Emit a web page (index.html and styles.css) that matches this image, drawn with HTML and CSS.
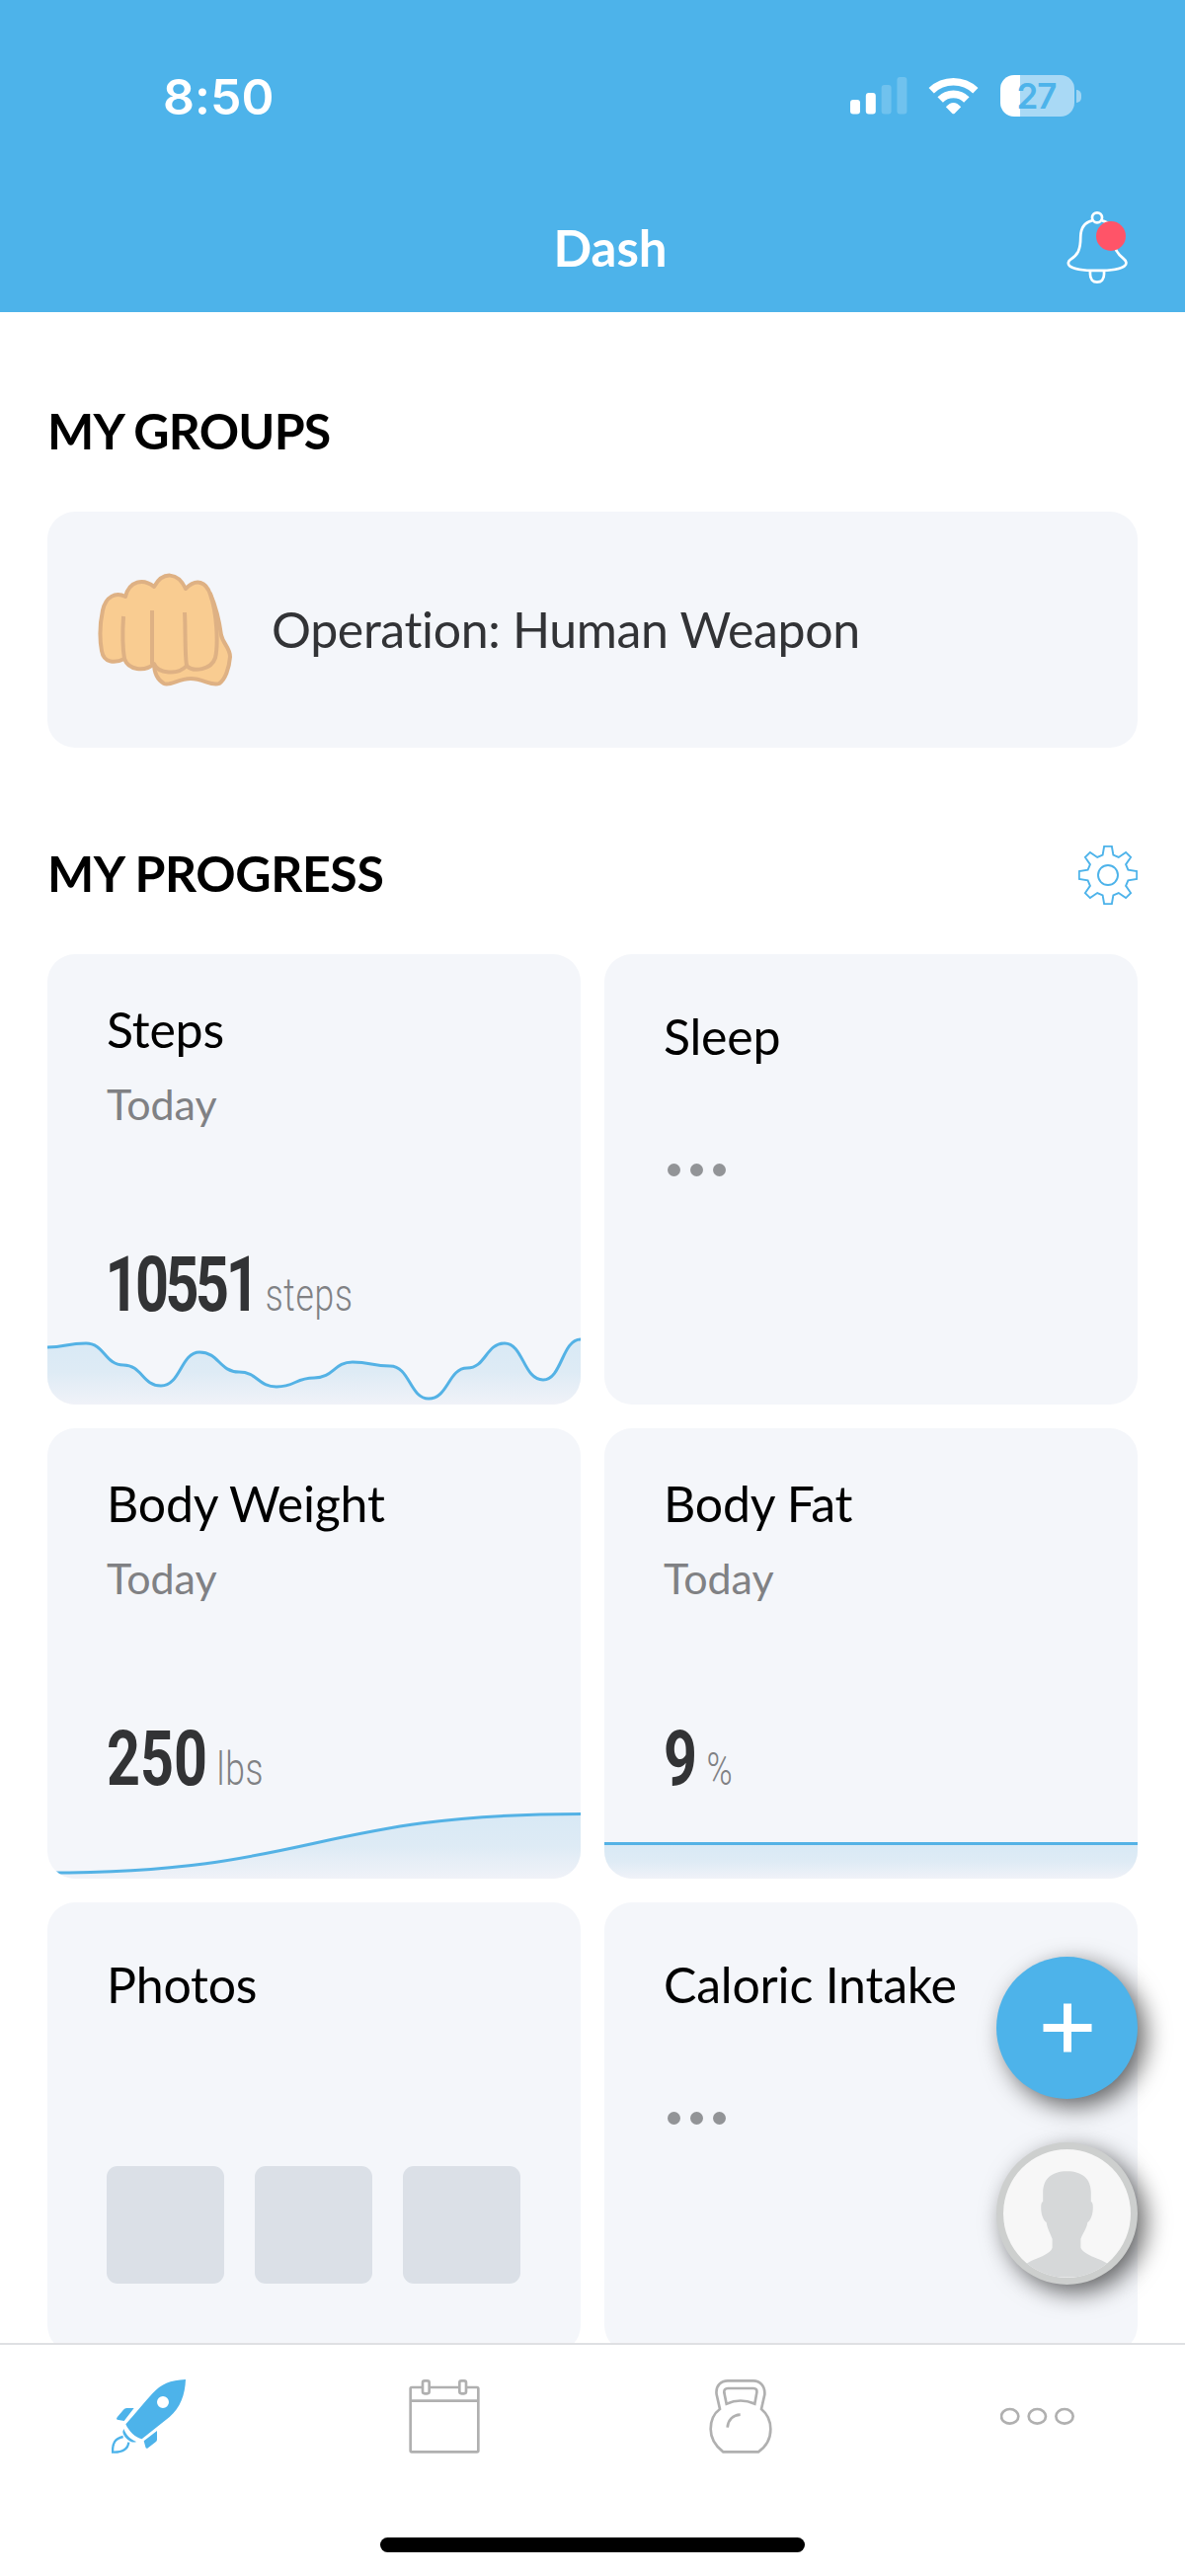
FILE: index.html
```html
<!DOCTYPE html>
<html lang="en">
<head>
    <meta charset="UTF-8">
    <meta name="viewport" content="width=device-width, initial-scale=1.0">
    <title>Dash</title>
    <link rel="stylesheet" href="styles.css">
</head>
<body>
    <header class="header">
        <div class="status-bar">
            <span class="time">8:50</span>
            <div class="status-icons">
                <svg class="signal" viewBox="0 0 58 38">
                    <rect x="0" y="23" width="10" height="14.5" rx="3"/>
                    <rect x="15.8" y="16" width="10" height="21.5" rx="3"/>
                    <rect class="dim" x="31.6" y="8" width="10" height="29.5" rx="3"/>
                    <rect class="dim" x="47.4" y="0" width="10" height="37.5" rx="3"/>
                </svg>
                <svg class="wifi" viewBox="361 84 152 114">
                    <path class="band" d="M370 125A97 97 0 0 1 504 125M397 153A56 56 0 0 1 477 153"/>
                    <path d="M414 175Q437 149 460 175L441 194Q437 198 433 194Z"/>
                </svg>
                <div class="battery"><span>27</span></div>
                <div class="battery-cap"></div>
            </div>
        </div>
        <div class="nav-bar">
            <h1>Dash</h1>
            <div class="bell">
                <svg viewBox="780 493 184 218">
                    <circle cx="872" cy="512" r="15"/>
                    <path d="M857 521C832 527 822 545 822 571C822 610 813 625 792 638C784 643 783 652 788 657C800 668 835 672 872 672C910 672 944 668 956 657C962 651 961 643 952 636C934 622 922 606 922 571C922 545 912 527 887 521"/>
                    <path d="M851 673V683C851 698 859 707 872 707C885 707 893 698 893 683V673"/>
                </svg>
                <span class="badge"></span>
            </div>
        </div>
    </header>

    <main class="content">
        <h2>MY GROUPS</h2>
        <div class="group-card">
            <svg class="fist" viewBox="69 199 137 116">
                <path class="skin" d="M183 220C188 232 192 247 194 262C196 271 203 275 203 284C202 296 198 307 192 311C184 314 176 306 163 306C151 306 142 314 136 311C129 307 126 300 126 290Z"/>
                <path class="skin" d="M97 223C87 218 77 223 74 237C71 251 71 267 73 278C75 290 86 291 96 286C100 297 116 300 126 291C130 301 150 303 159 293C166 300 184 297 188 285C191 272 190 240 183 221C179 208 169 204 158 215C150 198 135 197 126 213C115 204 101 207 97 223Z"/>
                <path class="crease" d="M95 243C94 258 94 274 96 286M124 237V291M157 239C158 258 157 280 159 293"/>
            </svg>
            <span>Operation: Human Weapon</span>
        </div>

        <div class="section-title">
            <h2>MY PROGRESS</h2>
            <svg class="gear" viewBox="-78 -78 156 156">
                <circle r="26"/>
                <path d="M-10-76H10L14-53L28-47L47-60L60-47L47-28L53-14L76-10V10L53 14L47 28L60 47L47 60L28 47L14 53L10 76H-10L-14 53L-28 47L-47 60L-60 47L-47 28L-53 14L-76 10V-10L-53-14L-47-28L-60-47L-47-60L-28-47L-14-53Z"/>
            </svg>
        </div>

        <div class="grid">
            <div class="card">
                <h3>Steps</h3>
                <p class="day">Today</p>
                <p class="value"><b class="tight">10551</b> <span>steps</span></p>
                <svg class="chart" viewBox="0 0 540 72">
                    <defs>
                        <linearGradient id="fade" x1="0" y1="0" x2="0" y2="1">
                            <stop offset="0" stop-color="#d8e9f5"/>
                            <stop offset="0.5" stop-color="#deebf5"/>
                            <stop offset="1" stop-color="#f0f2f8"/>
                        </linearGradient>
                    </defs>
                    <path class="area" d="M0 14C19 14 19 10 39 10C58 10 58 32 77 32C96 32 96 53 115 53C135 53 135 19 154 19C174 19 174 39 194 39C213 39 213 54 232 54C251 54 251 45 270 45C290 45 290 29 309 29C328 29 328 33 347 33C367 33 367 66 386 66C406 66 406 35 425 35C444 35 444 10 463 10C482 10 482 47 502 47C521 47 521 6 540 6V72H0Z"/>
                    <path class="line" d="M0 14C19 14 19 10 39 10C58 10 58 32 77 32C96 32 96 53 115 53C135 53 135 19 154 19C174 19 174 39 194 39C213 39 213 54 232 54C251 54 251 45 270 45C290 45 290 29 309 29C328 29 328 33 347 33C367 33 367 66 386 66C406 66 406 35 425 35C444 35 444 10 463 10C482 10 482 47 502 47C521 47 521 6 540 6"/>
                </svg>
            </div>
            <div class="card empty">
                <h3>Sleep</h3>
                <div class="dots"><i></i><i></i><i></i></div>
            </div>
            <div class="card">
                <h3>Body Weight</h3>
                <p class="day">Today</p>
                <p class="value"><b>250</b> <span>lbs</span></p>
                <svg class="chart" viewBox="0 0 540 72">
                    <path class="area" d="M0 66C270 66 270 6.500 540 6.500V72H0Z"/>
                    <path class="line" d="M0 66C270 66 270 6.500 540 6.500"/>
                </svg>
            </div>
            <div class="card">
                <h3>Body Fat</h3>
                <p class="day">Today</p>
                <p class="value"><b>9</b> <span>%</span></p>
                <svg class="chart" viewBox="0 0 540 72">
                    <path class="area" d="M0 36.500H540V72H0Z"/>
                    <path class="line" d="M0 36.500H540"/>
                </svg>
            </div>
            <div class="card empty">
                <h3>Photos</h3>
                <div class="photos"><i></i><i></i><i></i></div>
            </div>
            <div class="card empty">
                <h3>Caloric Intake</h3>
                <div class="dots"><i></i><i></i><i></i></div>
            </div>
        </div>

        <div class="floating">
            <button class="add">
                <svg viewBox="0 0 50 50"><path d="M25 0.500V49.500M0.500 25H49.500"/></svg>
            </button>
            <div class="avatar">
                <svg viewBox="-65 -65 130 130">
                    <path d="M0-43C16-43 25-35 24.500-20V-12C28-12 27 6 21 9C20 16 16 20 14 26V35C18 43 32 45 41 51L50 65H-50L-41 51C-32 45-18 43-15 35V26C-17 20-20 16-21 9C-27 6-28-12-24.500-12V-20C-25-35-16-43 0-43Z"/>
                </svg>
            </div>
        </div>
    </main>

    <nav class="tab-bar">
        <a class="tab active">
            <svg width="75" height="75" viewBox="96 147 225 225">
                <path fill-rule="evenodd" d="M321 147C273 150 247 160 220 190C194 219 165 254 139 283C147 302 168 325 188 328L272 261C305 232 319 195 321 147ZM270 216A18 18 0 1 1 234 216A18 18 0 1 1 270 216Z"/>
                <path d="M142 234H164L134 273L113 269Q109 267 113 262L132 239Q136 234 142 234ZM234 303V330Q234 334 230 337L205 356Q200 358 199 352L194 334ZM133 297C140 316 153 329 171 336C167 339 159 338 153 335C141 328 130 315 130 305Z"/>
                <path class="flame" d="M131 321C105 327 99 340 99 368C125 369 145 362 148 338"/>
            </svg>
        </a>
        <a class="tab">
            <svg width="72" height="75" viewBox="1003 147 216 225">
                <rect x="1008" y="171" width="206" height="196" rx="4"/>
                <path d="M1008 212H1214"/>
                <rect class="ring" x="1045" y="151" width="20" height="39" rx="6"/>
                <rect class="ring" x="1157" y="151" width="20" height="39" rx="6"/>
            </svg>
        </a>
        <a class="tab">
            <svg width="64" height="75" viewBox="235 147 192 225">
                <path d="M278 367H385C410 350 422 325 422 298C422 272 410 250 394 237L404 193C406 165 388 151 370 151H292C272 151 254 165 258 193L268 237C250 250 240 272 240 298C240 325 255 350 278 367Z"/>
                <path d="M288 221L281 187Q280 174 292 174H370Q382 174 380 187L374 221Q331 202 288 221Z"/>
                <path d="M291 293C293 271 307 255 330 254"/>
            </svg>
        </a>
        <a class="tab">
            <svg width="75" height="75" viewBox="0 0 225 225">
                <ellipse cx="29" cy="112" rx="26" ry="22"/>
                <ellipse cx="112" cy="112" rx="26" ry="22"/>
                <ellipse cx="195" cy="112" rx="26" ry="22"/>
            </svg>
        </a>
        <div class="home-indicator"></div>
    </nav>
</body>
</html>
```
FILE: styles.css
```css
* {
    box-sizing: border-box;
    margin: 0;
    padding: 0;
}
body {
    width: 1200px;
    height: 2608px;
    display: flex;
    flex-direction: column;
    background: #fff;
    color: #000;
    font-family: Lato, sans-serif;
    font-variant-ligatures: none;
    overflow: hidden;
}
svg {
    display: block;
}

/* header */
.header {
    height: 316px;
    background: #4db3ea;
    color: #fff;
}
.status-bar {
    height: 194px;
    padding: 0 105px 0 165px;
    display: flex;
    align-items: center;
    justify-content: space-between;
}
.time {
    padding-top: 2px;
    font-family: Inter, sans-serif;
    font-size: 50px;
    font-weight: 600;
    line-height: 60px;
}
.status-icons {
    display: flex;
    align-items: center;
}
.signal {
    width: 58px;
    height: 38px;
    fill: #fff;
}
.signal .dim {
    opacity: 0.2;
}
.wifi {
    width: 51px;
    height: 38px;
    margin-left: 21px;
    fill: #fff;
}
.wifi .band {
    fill: none;
    stroke: #fff;
    stroke-width: 23;
}
.battery {
    width: 75px;
    height: 42px;
    margin-left: 22px;
    padding-right: 2px;
    border-radius: 14px;
    background: linear-gradient(to right, #fff 20px, #a9d9f5 20px);
    color: #4db3ea;
    font-family: Inter, sans-serif;
    font-size: 35px;
    font-weight: 600;
    letter-spacing: -1px;
    line-height: 42px;
    text-align: center;
}
.battery-cap {
    width: 5px;
    height: 13px;
    margin-left: 2px;
    border-radius: 0 5px 5px 0;
    background: #a0d5f3;
}
.nav-bar {
    height: 122px;
    padding: 0 58px 0 94px;
    display: grid;
    grid-template-columns: 1fr auto 1fr;
}
.nav-bar h1 {
    grid-column: 2;
    margin-top: 26px;
    font-size: 51px;
    line-height: 62px;
}
.bell {
    position: relative;
    justify-self: end;
    width: 62px;
    height: 73px;
    margin-top: 20px;
}
.bell svg {
    width: 62px;
    height: 73px;
    fill: none;
    stroke: #fff;
    stroke-width: 8;
}
.badge {
    position: absolute;
    top: 10px;
    right: 2px;
    width: 30px;
    height: 30px;
    border-radius: 50%;
    background: #ff5468;
}

/* content */
.content {
    position: relative;
    height: 2056px;
    padding: 90px 48px 0;
    overflow: hidden;
}
h2 {
    font-size: 50px;
    letter-spacing: -0.8px;
    line-height: 60px;
}
.group-card {
    height: 239px;
    margin-top: 52px;
    padding: 0 0 2px 51px;
    display: flex;
    align-items: center;
    border-radius: 28px;
    background: #f4f6fa;
    color: #323336;
    font-size: 50px;
    letter-spacing: -0.35px;
}
.fist {
    width: 137px;
    height: 116px;
    margin: 2px 39px 0 0;
}
.fist path {
    stroke: #deb184;
    stroke-width: 4;
    stroke-linejoin: round;
}
.skin {
    fill: #f9cc91;
}
.crease {
    fill: none;
}
.section-title {
    margin: 97px 0 50px;
    display: flex;
    align-items: center;
    justify-content: space-between;
}
.gear {
    width: 60px;
    height: 60px;
    margin-bottom: -1px;
    fill: none;
    stroke: #4db3ea;
    stroke-width: 5;
}
.section-title h2 {
    margin-bottom: 2px;
    letter-spacing: -0.4px;
}
.grid {
    display: grid;
    grid-template-columns: 540px 540px;
    grid-auto-rows: 456px;
    gap: 24px;
}
.card {
    position: relative;
    padding: 46px 60px 0;
    border-radius: 28px;
    background: #f4f6fa;
    overflow: hidden;
}
.card.empty {
    padding-top: 53px;
}
h3 {
    font-size: 50px;
    font-weight: 400;
    letter-spacing: -0.2px;
    line-height: 60px;
    white-space: nowrap;
}
.day {
    margin-top: 20px;
    color: #808184;
    font-size: 43px;
    line-height: 52px;
}
.value {
    margin-top: 112px;
    color: #808184;
    font-family: Roboto, sans-serif;
    font-size: 46px;
    font-weight: 300;
    letter-spacing: 1px;
    line-height: 90px;
    white-space: nowrap;
    transform: scaleX(0.77);
    transform-origin: left;
}
.value b {
    color: #323335;
    font-size: 77px;
    font-weight: 700;
    letter-spacing: 0;
}
.value .tight {
    margin-left: -2px;
    letter-spacing: -4.5px;
}
.chart {
    position: absolute;
    left: 0;
    bottom: 0;
    width: 540px;
    height: 72px;
}
.area {
    fill: url(#fade);
}
.line {
    fill: none;
    stroke: #54b2e5;
    stroke-width: 3;
}
.dots {
    display: flex;
    gap: 10px;
    margin: 99px 0 0 4px;
}
.dots i {
    width: 13px;
    height: 13px;
    border-radius: 50%;
    background: #929497;
}
.photos {
    display: flex;
    gap: 31px;
    margin-top: 154px;
}
.photos i {
    width: 119px;
    height: 119px;
    border-radius: 11px;
    background: #dbe0e7;
}

/* floating buttons */
.floating {
    position: absolute;
    right: 48px;
    top: 1665px;
    display: flex;
    flex-direction: column;
    gap: 44px;
}
.add, .avatar {
    width: 143px;
    height: 144px;
    border-radius: 50%;
    box-shadow: 8px 8px 24px rgba(0, 0, 0, 0.6);
}
.add {
    display: flex;
    align-items: center;
    justify-content: center;
    border: none;
    background: #4db3ea;
}
.add svg {
    width: 50px;
    height: 50px;
    stroke: #fff;
    stroke-width: 8;
}
.avatar {
    border: 7px solid #cdcfce;
    background: #f7f7f7;
}
.avatar svg {
    width: 129px;
    height: 130px;
    border-radius: 50%;
    fill: #d6d8d9;
}

/* tab bar */
.tab-bar {
    position: relative;
    height: 236px;
    display: flex;
    border-top: 2px solid #dfe0e3;
    background: #fff;
}
.tab {
    flex: 1;
    height: 145px;
    display: flex;
    align-items: center;
    justify-content: center;
}
.tab svg {
    fill: none;
    stroke: #b0b0b0;
    stroke-width: 8;
}
.tab .ring {
    fill: #fff;
}
.tab.active svg {
    fill: #4db3ea;
    stroke: none;
}
.tab.active .flame {
    fill: none;
    stroke: #4db3ea;
    stroke-width: 7;
}
.home-indicator {
    position: absolute;
    left: 385px;
    bottom: 24px;
    width: 430px;
    height: 15px;
    border-radius: 8px;
    background: #000;
}
```
